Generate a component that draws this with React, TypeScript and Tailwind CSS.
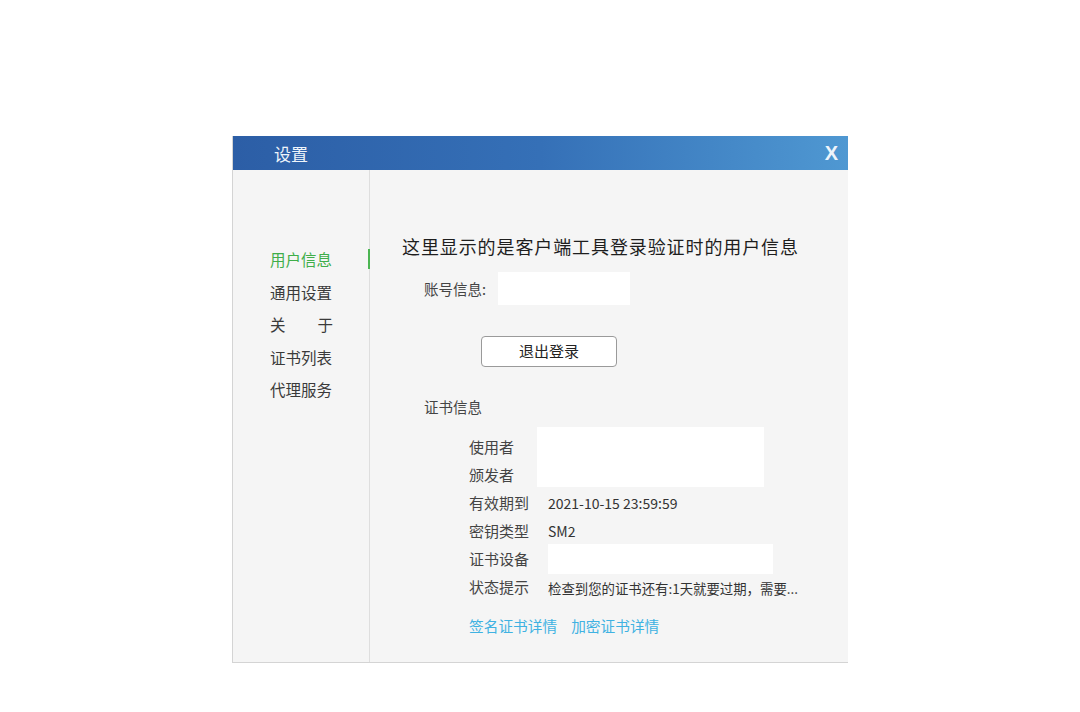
import React from 'react';

const navItems = ['用户信息', '通用设置', '关于', '证书列表', '代理服务'];

const font = "font-['Microsoft_YaHei','Noto_Sans_CJK_SC',sans-serif]";

export default function App() {
    return (
        <div className={`min-h-[712px] w-[1080px] bg-white pt-[136px] pl-[232px] ${font}`}>
            <div className="flex w-[616px] flex-col border-b border-l border-[#d4d4d4] bg-[#f5f5f5]">
                <div className="flex h-[34px] items-center justify-between bg-gradient-to-r from-[#2c5ea6] via-[#3570b7] to-[#4f98d2] pl-[41px] pr-[10px] text-[#eef4fb]">
                    <span className="text-[17px] leading-none">设置</span>
                    <span className="font-['Liberation_Sans',sans-serif] text-[20px] font-semibold leading-none">X</span>
                </div>

                <div className="flex h-[492px]">
                    <nav className="flex w-[137px] flex-col gap-[12.5px] border-r border-[#dedede] pt-[79px]">
                        {navItems.map((item, i) => (
                            <div key={item} className="relative h-[20px] pl-[37px] leading-[20px]">
                                <span
                                    className={`text-[15.5px] leading-[20px] ${
                                        i === 0 ? 'text-[#3fae49]' : 'text-[#3a3a3a]'
                                    } ${item === '关于' ? 'tracking-[32px]' : ''}`}
                                >
                                    {item}
                                </span>
                                {i === 0 && (
                                    <span className="absolute top-[0px] right-[-1px] h-[20px] w-[2px] bg-[#4cb552]" />
                                )}
                            </div>
                        ))}
                    </nav>

                    <main className="flex flex-1 flex-col pt-[64px] pl-[32px]">
                        <h1 className="text-[18px] leading-[24px] tracking-[0.9px] text-[#1e1e1e]">
                            这里显示的是客户端工具登录验证时的用户信息
                        </h1>

                        <div className="mt-[14px] flex items-center pl-[22px]">
                            <span className="w-[74px] text-[14.5px] text-[#444]">账号信息:</span>
                            <div className="h-[33px] w-[132px] bg-white" />
                        </div>

                        <button
                            type="button"
                            className="mt-[31px] ml-[79px] h-[31px] w-[136px] rounded-[4px] border border-[#9a9a9a] bg-white text-[15px] text-[#222]"
                        >
                            退出登录
                        </button>

                        <p className="mt-[30px] pl-[22px] text-[14.5px] leading-[20px] text-[#444]">证书信息</p>

                        <div className="mt-[10px] flex flex-col pl-[67px] text-[15px] text-[#444]">
                            <div className="flex">
                                <div className="flex w-[68px] flex-col pt-[6px]">
                                    <span className="leading-[28px]">使用者</span>
                                    <span className="leading-[28px]">颁发者</span>
                                </div>
                                <div className="h-[60px] w-[227px] bg-white" />
                            </div>
                            <div className="flex h-[28px] items-center">
                                <span className="w-[79px]">有效期到</span>
                                <span className="text-[14px] text-[#333]">2021-10-15 23:59:59</span>
                            </div>
                            <div className="flex h-[28px] items-center">
                                <span className="w-[79px]">密钥类型</span>
                                <span className="text-[14px] text-[#333]">SM2</span>
                            </div>
                            <div className="flex h-[28px] items-center">
                                <span className="w-[79px]">证书设备</span>
                                <div className="h-[30px] w-[225px] bg-white" />
                            </div>
                            <div className="flex h-[28px] items-center">
                                <span className="w-[79px]">状态提示</span>
                                <span className="pt-[3px] text-[13.4px] text-[#333]">
                                    检查到您的证书还有:1天就要过期，需要...
                                </span>
                            </div>
                            <div className="mt-[14px] flex gap-[14px] text-[14.7px] text-[#3fb2e2]">
                                <a href="#">签名证书详情</a>
                                <a href="#">加密证书详情</a>
                            </div>
                        </div>
                    </main>
                </div>
            </div>
        </div>
    );
}
